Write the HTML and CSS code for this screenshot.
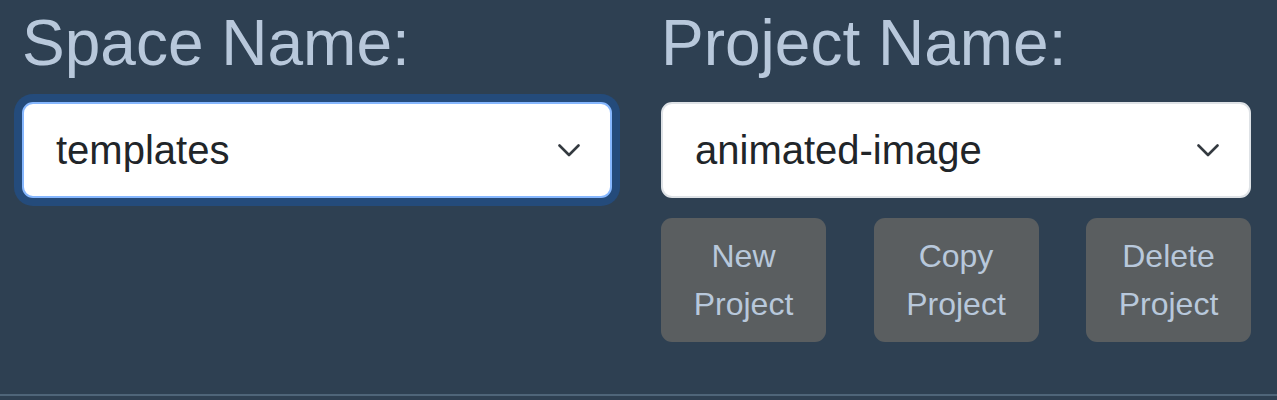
FILE: index.html
```html
<!DOCTYPE html>
<html lang="en">
<head>
<meta charset="utf-8">
<title>Project selector</title>
<link rel="stylesheet" href="styles.css">
</head>
<body>
<div class="panel">
  <div class="grid">
    <div class="col">
      <label class="label">Space Name:</label>
      <div class="select focused">
        <span class="value">templates</span>
        <svg class="chev" width="22" height="13" viewBox="0 0 22 13"><polyline points="1.5,1.5 11,11 20.5,1.5" fill="none" stroke="#343a40" stroke-width="2.6" stroke-linecap="round" stroke-linejoin="round"/></svg>
      </div>
    </div>
    <div class="col">
      <label class="label">Project Name:</label>
      <div class="select">
        <span class="value">animated-image</span>
        <svg class="chev" width="22" height="13" viewBox="0 0 22 13"><polyline points="1.5,1.5 11,11 20.5,1.5" fill="none" stroke="#343a40" stroke-width="2.6" stroke-linecap="round" stroke-linejoin="round"/></svg>
      </div>
      <div class="buttons">
        <button class="btn">New<br>Project</button>
        <button class="btn">Copy<br>Project</button>
        <button class="btn">Delete<br>Project</button>
      </div>
    </div>
  </div>
</div>
<div class="divider"></div>
</body>
</html>
```
FILE: styles.css
```css
html, body {
  margin: 0;
  padding: 0;
  background: #2e4052;
  font-family: "Liberation Sans", Arial, sans-serif;
}
.panel {
  height: 394px;
  box-sizing: border-box;
  padding: 5px 26px 0 22px;
}
.grid {
  display: grid;
  grid-template-columns: 590px 590px;
  column-gap: 49px;
}
.col {
  display: flex;
  flex-direction: column;
}
.label {
  display: block;
  font-size: 64px;
  line-height: 76.8px;
  color: #b8c8db;
  margin-bottom: 20px;
}
.select {
  height: 96px;
  box-sizing: border-box;
  background: #fff;
  border: 2px solid #dee2e6;
  border-radius: 11px;
  display: flex;
  align-items: center;
  justify-content: space-between;
  padding: 0 30px 0 32px;
}
.select.focused {
  border-color: #86b7fe;
  box-shadow: 0 0 0 8px #244b7b;
}
.value {
  font-size: 40px;
  line-height: 60px;
  color: #212529;
}
.chev {
  display: block;
  margin-top: 2px;
}
.buttons {
  display: flex;
  justify-content: space-between;
  margin-top: 20px;
}
.btn {
  width: 165px;
  height: 124px;
  box-sizing: border-box;
  border: 0;
  border-radius: 11px;
  background: #5a5e60;
  color: #b8c8db;
  font-family: "Liberation Sans", Arial, sans-serif;
  font-size: 32px;
  line-height: 48px;
  padding: 14px 0;
  text-align: center;
}
.divider {
  height: 2px;
  background: #4f6579;
}
```
